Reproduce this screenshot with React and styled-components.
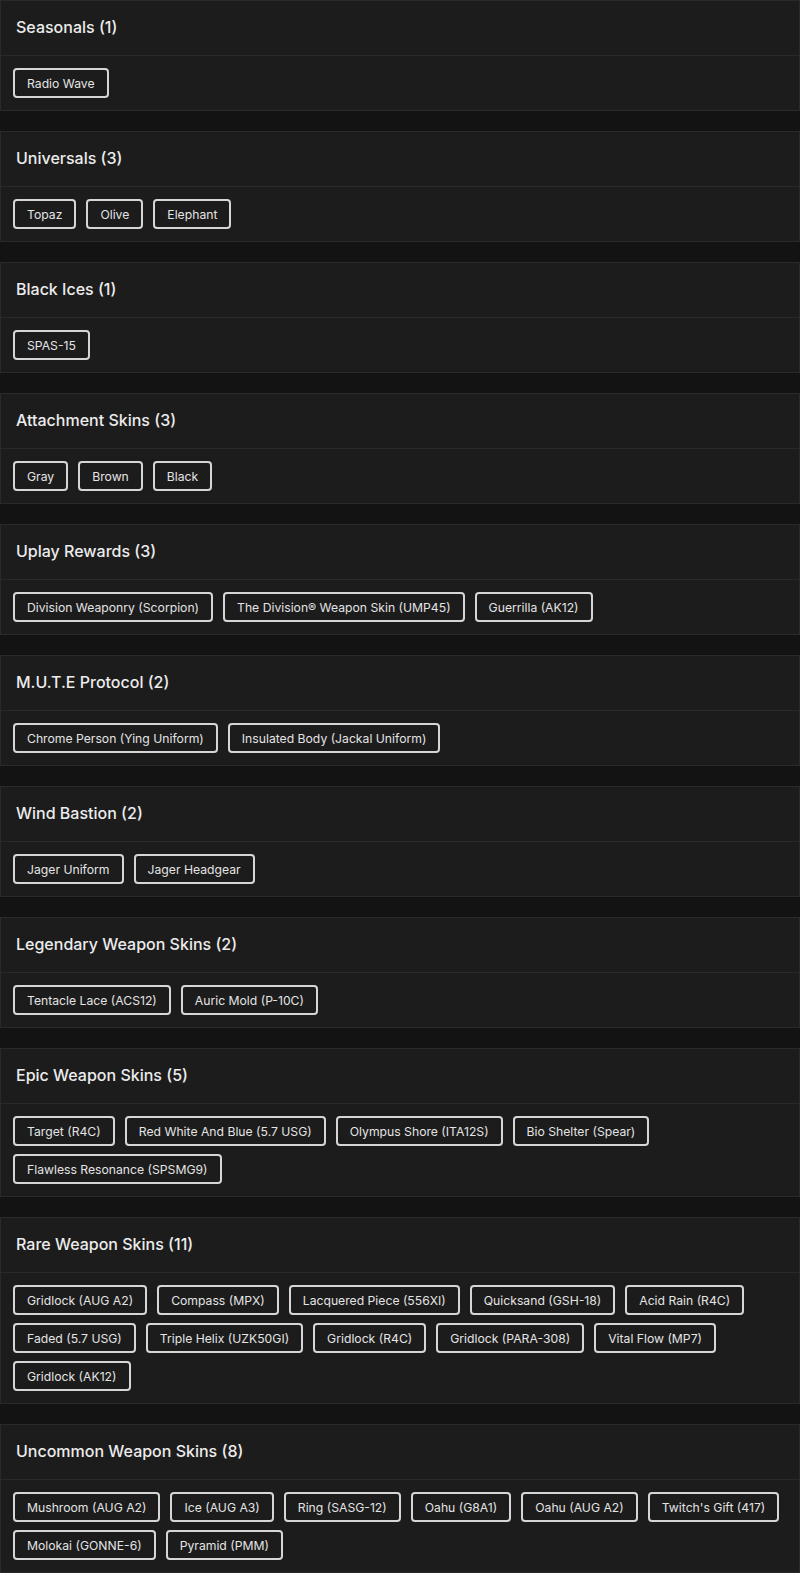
import React from 'react';
import styled, { createGlobalStyle } from 'styled-components';

const GlobalStyle = createGlobalStyle`
  html, body {
    margin: 0;
    padding: 0;
    background: #131313;
  }
  body {
    font-family: Inter, "Open Sans", "DejaVu Sans", sans-serif;
    color: #e8e8e8;
  }
`;

const groups = [
  { title: 'Seasonals', items: ['Radio Wave'] },
  { title: 'Universals', items: ['Topaz', 'Olive', 'Elephant'] },
  { title: 'Black Ices', items: ['SPAS-15'] },
  { title: 'Attachment Skins', items: ['Gray', 'Brown', 'Black'] },
  {
    title: 'Uplay Rewards',
    items: ['Division Weaponry (Scorpion)', 'The Division® Weapon Skin (UMP45)', 'Guerrilla (AK12)'],
  },
  { title: 'M.U.T.E Protocol', items: ['Chrome Person (Ying Uniform)', 'Insulated Body (Jackal Uniform)'] },
  { title: 'Wind Bastion', items: ['Jager Uniform', 'Jager Headgear'] },
  { title: 'Legendary Weapon Skins', items: ['Tentacle Lace (ACS12)', 'Auric Mold (P-10C)'] },
  {
    title: 'Epic Weapon Skins',
    items: [
      'Target (R4C)',
      'Red White And Blue (5.7 USG)',
      'Olympus Shore (ITA12S)',
      'Bio Shelter (Spear)',
      'Flawless Resonance (SPSMG9)',
    ],
  },
  {
    title: 'Rare Weapon Skins',
    items: [
      'Gridlock (AUG A2)',
      'Compass (MPX)',
      'Lacquered Piece (556XI)',
      'Quicksand (GSH-18)',
      'Acid Rain (R4C)',
      'Faded (5.7 USG)',
      'Triple Helix (UZK50GI)',
      'Gridlock (R4C)',
      'Gridlock (PARA-308)',
      'Vital Flow (MP7)',
      'Gridlock (AK12)',
    ],
  },
  {
    title: 'Uncommon Weapon Skins',
    items: [
      'Mushroom (AUG A2)',
      'Ice (AUG A3)',
      'Ring (SASG-12)',
      'Oahu (G8A1)',
      'Oahu (AUG A2)',
      "Twitch's Gift (417)",
      'Molokai (GONNE-6)',
      'Pyramid (PMM)',
    ],
  },
];

const App = () => {
  return (
    <>
      <GlobalStyle />
      <Page>
        {groups.map((group) => (
          <Card key={group.title}>
            <CardHeader>
              {group.title} ({group.items.length})
            </CardHeader>
            <CardBody>
              {group.items.map((item, i) => (
                <Chip key={i}>{item}</Chip>
              ))}
            </CardBody>
          </Card>
        ))}
      </Page>
    </>
  );
};

export default App;

const Page = styled.div`
  display: flex;
  flex-direction: column;
  gap: 20px;
`;

const Card = styled.section`
  background-color: #1c1c1c;
  border: 1px solid #2a2a2a;
  display: flex;
  flex-direction: column;
`;

const CardHeader = styled.div`
  padding: 15px 15px 17px;
  font-size: 16px;
  line-height: 22px;
  font-weight: 500;
  color: #ececec;
  border-bottom: 1px solid #2a2a2a;
`;

const CardBody = styled.div`
  display: flex;
  flex-wrap: wrap;
  gap: 8px 10px;
  padding: 12px 12px;
`;

const Chip = styled.div`
  height: 30px;
  box-sizing: border-box;
  display: flex;
  align-items: center;
  padding: 0 12px;
  border: 2px solid #d6d6d6;
  border-radius: 4px;
  font-size: 12.2px;
  color: #e4e4e4;
  background-color: #1c1c1c;
  white-space: nowrap;
`;
